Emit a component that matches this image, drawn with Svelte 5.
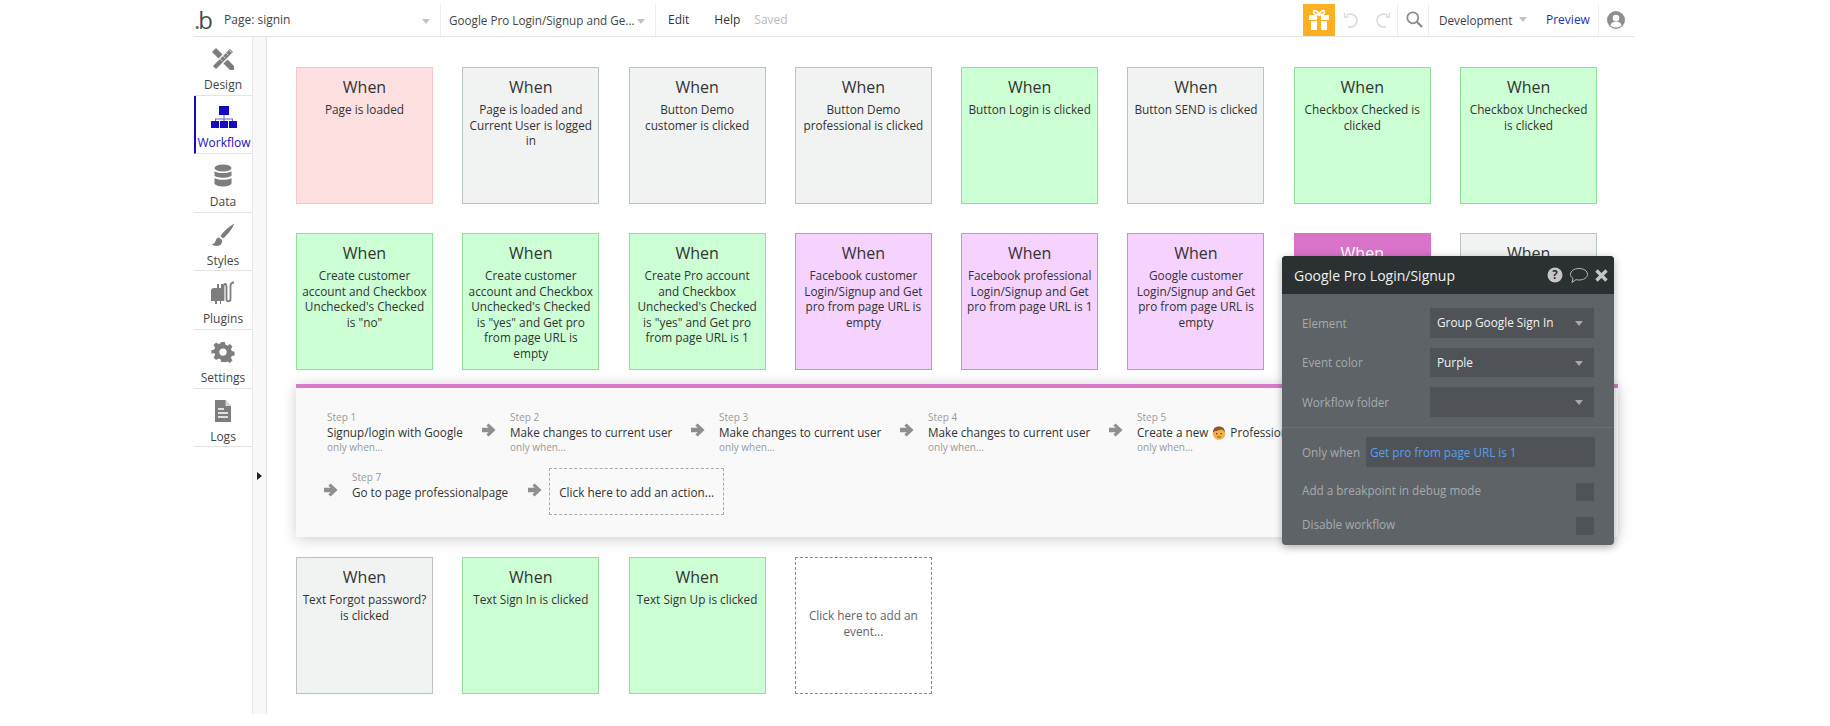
<script lang="ts">
	type Tone = 'red' | 'gray' | 'green' | 'purple' | 'picked';

	interface Evt {
		tone: Tone;
		text: string;
	}

	const upperEvents: Evt[] = [
		{ tone: 'red', text: 'Page is loaded' },
		{ tone: 'gray', text: 'Page is loaded and Current User is logged in' },
		{ tone: 'gray', text: 'Button Demo customer is clicked' },
		{ tone: 'gray', text: 'Button Demo professional is clicked' },
		{ tone: 'green', text: 'Button Login is clicked' },
		{ tone: 'gray', text: 'Button SEND is clicked' },
		{ tone: 'green', text: 'Checkbox Checked is clicked' },
		{ tone: 'green', text: 'Checkbox Unchecked is clicked' },
		{ tone: 'green', text: 'Create customer account and Checkbox Unchecked\'s Checked is "no"' },
		{ tone: 'green', text: 'Create customer account and Checkbox Unchecked\'s Checked is "yes" and Get pro from page URL is empty' },
		{ tone: 'green', text: 'Create Pro account and Checkbox Unchecked\'s Checked is "yes" and Get pro from page URL is 1' },
		{ tone: 'purple', text: 'Facebook customer Login/Signup and Get pro from page URL is empty' },
		{ tone: 'purple', text: 'Facebook professional Login/Signup and Get pro from page URL is 1' },
		{ tone: 'purple', text: 'Google customer Login/Signup and Get pro from page URL is empty' },
		{ tone: 'picked', text: '' },
		{ tone: 'gray', text: '' }
	];

	const lowerEvents: Evt[] = [
		{ tone: 'gray', text: 'Text Forgot password? is clicked' },
		{ tone: 'green', text: 'Text Sign In is clicked' },
		{ tone: 'green', text: 'Text Sign Up is clicked' }
	];

	const steps = [
		{ n: 1, name: 'Signup/login with Google', width: 155 },
		{ n: 2, name: 'Make changes to current user', width: 181 },
		{ n: 3, name: 'Make changes to current user', width: 181 },
		{ n: 4, name: 'Make changes to current user', width: 181 }
	];

	const tabs = ['Design', 'Workflow', 'Data', 'Styles', 'Plugins', 'Settings', 'Logs'];
</script>

{#snippet arrow()}
	<svg class="arrow" width="14" height="14" viewBox="0 0 14 14">
		<path d="M0 4.8h6.6L4.4 2.4 6.6.4 13.6 7l-7 6.600-2.200-2 2.200-2.400H0z" fill="#8f8f8f" />
	</svg>
{/snippet}

{#snippet tabIcon(name: string)}
	{#if name === 'Design'}
		<svg width="24" height="24" viewBox="0 0 24 24" fill="#7d7d7d">
			<path d="M1 5 5 1l18 18v4h-4z" />
			<path d="M23 5 19 1 1 19l4 4z" stroke="#fff" stroke-width="1.4" />
			<path d="M18.6 3.4 20.6 5.4M15.6 6.4 17 7.8M12.6 9.4 14 10.8M9.6 12.4 11 13.8" stroke="#fff" stroke-width="1" />
		</svg>
	{:else if name === 'Workflow'}
		<svg width="26" height="24" viewBox="0 0 26 24" fill="#1509c4">
			<rect x="8" y="1" width="10" height="9" />
			<path d="M12.5 10h1v3.5H22V17h-1v-2.5h-7.5V17h-1v-2.5H5V17H4v-3.5h8.5z" fill="#6d66d8" />
			<rect x="0" y="16" width="8" height="7" />
			<rect x="9" y="16" width="8" height="7" />
			<rect x="18" y="16" width="8" height="7" />
		</svg>
	{:else if name === 'Data'}
		<svg width="18" height="24" viewBox="0 0 18 24" fill="#7d7d7d">
			<ellipse cx="9" cy="4" rx="8.5" ry="3.6" />
			<path d="M.5 7.2c2 2.4 15 2.4 17 0v4.2c-1.5 3-15.5 3-17 0z" />
			<path d="M.5 14c2 2.4 15 2.4 17 0v5.6c-1.5 4-15.5 4-17 0z" />
		</svg>
	{:else if name === 'Styles'}
		<svg width="24" height="24" viewBox="0 0 24 24" fill="#7d7d7d">
			<path d="M23.5.5C19 3 13 7.5 9.5 13l2.5 2.5C17 11.5 21.5 5 23.5.5z" />
			<path d="M8 14.5c-3.5.5-3 4-4.5 5.500-.7.8-2 1-3 1 2.500 2.500 8 3 10-.5 1-1.800.5-3.500-.2-4z" />
		</svg>
	{:else if name === 'Plugins'}
		<svg width="24" height="24" viewBox="0 0 24 24" fill="#7d7d7d">
			<path d="M3 7h3V3h2v4h2V3h2v4h1v13h-3v3H9v-3H6v3H4v-3H0V10c0-2 1-3 3-3z" />
			<path d="M12.5 20V7.500c0-6 3-6 3-1V18c0 3 4 3 4 0V4.500c0-1.500 1-3 3.500-3" fill="none" stroke="#7d7d7d" stroke-width="1.8" />
		</svg>
	{:else if name === 'Settings'}
		<svg width="24" height="24" viewBox="0 0 24 24" fill="#7d7d7d">
			<path fill-rule="evenodd" d="M10 1h4l.7 3.100 2.200.9 2.700-1.700 2.800 2.800-1.700 2.700.9 2.200 3.100.7v4l-3.100.7-.9 2.200 1.700 2.700-2.800 2.800-2.700-1.700-2.200.9L14 23h-4l-.7-3.100-2.200-.9-2.700 1.700-2.800-2.800 1.700-2.700-.9-2.200L-.7 14v-4l3.100-.7.9-2.200L1.600 4.400l2.800-2.800 2.700 1.700 2.200-.9zM12 8a4 4 0 1 0 0 8 4 4 0 0 0 0-8z" transform="translate(1.1 1.1) scale(.91)" />
		</svg>
	{:else}
		<svg width="18" height="24" viewBox="0 0 18 24" fill="#7d7d7d">
			<path d="M1 1h10.500L17 7v16H1z" />
			<path d="M11.500 1v6H17" fill="#fff" opacity=".7" />
			<path d="M4 10h6M4 14h10M4 18h10" stroke="#fff" stroke-width="1.3" />
		</svg>
	{/if}
{/snippet}

{#snippet eventCard(evt: Evt)}
	<div class="card {evt.tone}">
		<div class="when">When</div>
		<div class="cond">{evt.text}</div>
	</div>
{/snippet}

<div class="page">
	<header class="topbar">
		<div class="logo"><span class="dot">.</span>b</div>
		<div class="picker page-picker">Page: signin<span class="caret"></span></div>
		<div class="picker flow-picker">Google Pro Login/Signup and Ge...<span class="caret"></span></div>
		<nav class="menu">
			<span>Edit</span>
			<span>Help</span>
			<span class="saved">Saved</span>
		</nav>
		<div class="gift">
			<svg width="22" height="22" viewBox="0 0 22 22" fill="#fff">
				<path d="M1 6h8v5H1zM13 6h8v5h-8zM3 12h6v9H3zM13 12h6v9h-6z" />
				<path d="M10.5 6C8 5.5 5 5 5.5 2.5 6.5.5 9.5 2 11 5.500 12.500 2 15.500.5 16.500 2.500 17 5 14 5.500 11.500 6z" fill="none" stroke="#fff" stroke-width="1.6" />
			</svg>
		</div>
		<div class="history">
			<svg width="16" height="16" viewBox="0 0 16 16" fill="none" stroke="#d9d9d9" stroke-width="1.5">
				<path d="M3.5 3.300A6.500 6.500 0 1 1 5 14.500" />
				<path d="M1.500 1v4h4" stroke-width="1.3" />
			</svg>
			<svg width="16" height="16" viewBox="0 0 16 16" fill="none" stroke="#d9d9d9" stroke-width="1.5">
				<path d="M12.5 3.300A6.500 6.500 0 1 0 11 14.500" />
				<path d="M14.500 1v4h-4" stroke-width="1.3" />
			</svg>
		</div>
		<div class="search">
			<svg width="17" height="17" viewBox="0 0 17 17" fill="none" stroke="#8c8c8c" stroke-width="1.8">
				<circle cx="6.8" cy="6.8" r="5.5" />
				<path d="M10.8 10.800 16 16" stroke-width="2.2" />
			</svg>
		</div>
		<div class="env">Development<span class="caret"></span></div>
		<div class="preview">Preview</div>
		<div class="account">
			<svg width="18" height="18" viewBox="0 0 18 18">
				<circle cx="9" cy="9" r="9" fill="#8f8f8f" />
				<circle cx="9" cy="7" r="3.3" fill="#fff" />
				<path d="M3.5 14.500c.5-3 3-4 5.500-4s5 1 5.500 4C13 16 11 16.500 9 16.500S5 16 3.500 14.500z" fill="#fff" />
			</svg>
		</div>
	</header>

	<div class="body">
		<aside class="sidebar">
			{#each tabs as tab}
				<div class="tab" class:active={tab === 'Workflow'}>
					<span class="tab-icon">{@render tabIcon(tab)}</span>
					<span>{tab}</span>
				</div>
			{/each}
		</aside>
		<div class="strip"><span class="strip-arrow"></span></div>

		<main class="canvas">
			<section class="grid">
				{#each upperEvents as evt}
					{@render eventCard(evt)}
				{/each}
			</section>

			<section class="actions">
				<div class="action-row">
					{#each steps as step}
						<div class="step" style="width: {step.width}px">
							<div class="step-no">Step {step.n}</div>
							<div class="step-name">{step.name}</div>
							<div class="only">only when...</div>
						</div>
						{@render arrow()}
					{/each}
					<div class="step">
						<div class="step-no">Step 5</div>
						<div class="step-name">
							Create a new
							<svg class="emoji" width="14" height="14" viewBox="0 0 14 14">
								<circle cx="7" cy="7.5" r="6.3" fill="#f5b04a" />
								<path d="M1 6.500C1 2 4 .5 7 .5s6 1.500 6 6c-1-2-2-2.500-3.500-3C7.500 4.500 3 4.500 1 6.500z" fill="#8a5a2b" />
								<circle cx="4.8" cy="7.8" r=".8" fill="#5a3a1a" />
								<circle cx="9.2" cy="7.8" r=".8" fill="#5a3a1a" />
								<path d="M5 10.500c1 .8 3 .8 4 0" fill="none" stroke="#5a3a1a" stroke-width=".7" />
							</svg>
							Professional
						</div>
						<div class="only">only when...</div>
					</div>
				</div>
				<div class="action-row second">
					{@render arrow()}
					<div class="step last">
						<div class="step-no">Step 7</div>
						<div class="step-name">Go to page professionalpage</div>
					</div>
					{@render arrow()}
					<div class="add-action">Click here to add an action...</div>
				</div>
			</section>

			<section class="grid">
				{#each lowerEvents as evt}
					{@render eventCard(evt)}
				{/each}
				<div class="card add-event">Click here to add an event...</div>
			</section>

			<div class="palette">
				<div class="palette-head">
					<span class="palette-title">Google Pro Login/Signup</span>
					<svg width="16" height="16" viewBox="0 0 16 16">
						<circle cx="8" cy="8" r="7.5" fill="#c4c6c7" />
						<text x="8" y="12" text-anchor="middle" font-size="11.5" font-weight="700" font-family="Open Sans" fill="#2b3032">?</text>
					</svg>
					<svg width="20" height="17" viewBox="0 0 20 17" fill="none" stroke="#b5b8b9" stroke-width="1">
						<path d="M10 1.500c5 0 8.500 2.500 8.500 5.800S15 13 10 13c-1 0-2-.1-3-.4L3 15.500l1-4C2.500 10.500 1.500 9 1.500 7.300 1.500 4 5 1.500 10 1.500z" />
					</svg>
					<svg width="13" height="13" viewBox="0 0 13 13" stroke="#c4c6c7" stroke-width="3.4">
						<path d="M1.500 1.500 11.500 11.500M11.500 1.500 1.500 11.500" />
					</svg>
				</div>
				<div class="palette-fields">
					<div class="field">
						<span class="label">Element</span>
						<div class="select">Group Google Sign In<span class="caret dark"></span></div>
					</div>
					<div class="field">
						<span class="label">Event color</span>
						<div class="select">Purple<span class="caret dark"></span></div>
					</div>
					<div class="field">
						<span class="label">Workflow folder</span>
						<div class="select"><span class="caret dark"></span></div>
					</div>
				</div>
				<div class="palette-lower">
					<div class="only-when">
						<span class="label">Only when</span>
						<div class="expr">Get pro from page URL is 1</div>
					</div>
					<div class="toggle">
						<span class="label">Add a breakpoint in debug mode</span>
						<span class="box"></span>
					</div>
					<div class="toggle">
						<span class="label">Disable workflow</span>
						<span class="box"></span>
					</div>
				</div>
			</div>
		</main>
	</div>
</div>

<style>
	:global(body) {
		margin: 0;
		background: #fff;
	}

	.page {
		width: 1440px;
		height: 726px;
		margin-left: 194px;
		font-family: 'Open Sans', sans-serif;
		color: #2b2b2b;
		overflow: hidden;
	}

	.topbar {
		display: flex;
		align-items: center;
		height: 37px;
		border-bottom: 1px solid #e4e4e4;
		box-sizing: border-box;
		font-size: 12px;
		padding-top: 3px;
	}

	.logo {
		width: 29px;
		flex: none;
		font-size: 24px;
		line-height: 30px;
		color: #4a4a4a;
		letter-spacing: -2px;
	}

	.dot {
		color: #666;
	}

	.picker {
		display: flex;
		align-items: center;
		height: 32px;
		flex: none;
		box-sizing: border-box;
		border-right: 1px solid #eee;
		color: #444;
		position: relative;
	}

	.page-picker {
		width: 218px;
		padding-left: 1px;
	}

	.flow-picker {
		width: 215px;
		padding-left: 8px;
		font-size: 11.7px;
	}

	.caret {
		display: inline-block;
		width: 0;
		height: 0;
		border: 4px solid transparent;
		border-top: 5px solid #c2c2c2;
		border-bottom: 0;
	}

	.page-picker .caret {
		position: absolute;
		right: 10px;
		top: 15px;
	}

	.flow-picker .caret {
		position: absolute;
		right: 10px;
		top: 15px;
	}

	.menu {
		display: flex;
		gap: 25px;
		margin-left: 12px;
		width: 635px;
		flex: none;
		color: #333;
	}

	.saved {
		color: #bbb;
		margin-left: -11px;
	}

	.gift {
		width: 32px;
		height: 32px;
		flex: none;
		background: #fdb022;
		display: flex;
		align-items: center;
		justify-content: center;
	}

	.history {
		display: flex;
		gap: 16px;
		height: 32px;
		width: 63px;
		flex: none;
		box-sizing: border-box;
		align-items: center;
		padding-left: 8px;
		border-right: 1px solid #eee;
	}

	.search {
		display: flex;
		align-items: center;
		height: 32px;
		width: 31px;
		flex: none;
		padding-left: 8px;
		box-sizing: border-box;
		border-right: 1px solid #eee;
	}

	.env {
		display: flex;
		align-items: center;
		gap: 7px;
		margin-left: 10px;
		width: 107px;
		flex: none;
		color: #3c3c46;
		font-size: 11.7px;
	}

	.preview {
		color: #2d2db8;
		width: 53px;
		flex: none;
		height: 32px;
		line-height: 32px;
		border-right: 1px solid #eee;
		box-sizing: border-box;
	}

	.account {
		display: flex;
		padding-left: 8px;
	}

	.body {
		display: flex;
		height: 689px;
	}

	.sidebar {
		width: 58px;
		flex: none;
		box-sizing: border-box;
	}

	.tab {
		display: flex;
		flex-direction: column;
		align-items: center;
		height: 58.6px;
		box-sizing: border-box;
		border-bottom: 1px solid #e4e4e4;
		font-size: 12px;
		line-height: 16px;
		color: #444;
		padding-top: 10px;
	}

	.tab-icon {
		display: flex;
		height: 24px;
		margin-bottom: 6px;
	}

	.tab.active {
		color: #1b10c4;
		border-left: 2px solid #1509c4;
		padding-top: 9px;
	}

	.strip {
		width: 15px;
		flex: none;
		height: 677px;
		background: #f8f8f8;
		border-left: 1px solid #e9e9e9;
		border-right: 1px solid #e4e4e4;
		box-sizing: border-box;
		position: relative;
	}

	.strip-arrow {
		position: absolute;
		left: 4px;
		top: 435px;
		border: 4px solid transparent;
		border-left: 5px solid #222;
		border-right: 0;
	}

	.canvas {
		position: relative;
		flex: 1;
		padding: 30px 18px 0 29px;
	}

	.grid {
		display: grid;
		grid-template-columns: repeat(8, 137px);
		column-gap: 29.3px;
		row-gap: 29px;
	}

	.card {
		height: 137px;
		box-sizing: border-box;
		border: 1px solid;
		padding: 9px 4px 0;
		text-align: center;
		color: #333;
	}

	.when {
		font-size: 16px;
		line-height: 21px;
	}

	.cond {
		font-size: 11.8px;
		line-height: 15.6px;
		margin-top: 4px;
	}

	.red {
		background: #ffe0e0;
		border-color: #f6c6c6;
	}

	.gray {
		background: #f1f3f2;
		border-color: #b9c3c6;
	}

	.green {
		background: #ccffd3;
		border-color: #8fe09c;
	}

	.purple {
		background: #f5d2ff;
		border-color: #d687d8;
	}

	.picked {
		background: #d973c9;
		border-color: #d973c9;
	}

	.picked .when {
		color: #fff;
	}

	.add-event {
		border: 1px dashed #888;
		background: #fff;
		color: #666;
		font-size: 11.8px;
		line-height: 15.6px;
		padding: 50px 10px 0;
	}

	.actions {
		margin: 14px -2px 20px 0;
		height: 153px;
		box-sizing: border-box;
		border-top: 4px solid #d87ac8;
		background: #f9f9f9;
		box-shadow: 0 2px 14px rgba(0, 0, 0, 0.2);
		padding: 22px 0 0 31px;
		overflow: hidden;
	}

	.action-row {
		display: flex;
		align-items: center;
		white-space: nowrap;
		height: 45px;
	}

	.action-row .arrow {
		flex: none;
		margin-right: 14px;
		margin-top: -6px;
	}

	.step {
		flex: none;
	}

	.step-no {
		font-size: 10px;
		line-height: 13px;
		color: #999;
	}

	.step-name {
		font-size: 11.7px;
		line-height: 16px;
		color: #333;
	}

	.emoji {
		vertical-align: -3px;
		margin: 0 1px;
	}

	.only {
		font-size: 10px;
		line-height: 13px;
		margin-top: 1px;
		color: #999;
	}

	.second {
		margin: 13px 0 0 -3px;
		height: 47px;
	}

	.second .arrow {
		margin-top: -3px;
	}

	.last {
		margin-right: 20px;
		margin-top: -13px;
	}

	.add-action {
		width: 175px;
		height: 47px;
		box-sizing: border-box;
		border: 1px dashed #aaa;
		display: flex;
		align-items: center;
		justify-content: center;
		font-size: 11.8px;
		color: #333;
		margin-left: -7px;
	}

	.palette {
		position: absolute;
		left: 1015px;
		top: 219px;
		width: 332px;
		height: 289px;
		border-radius: 4px;
		background: #5e6367;
		box-shadow: 0 2px 8px rgba(0, 0, 0, 0.3);
		color: #fff;
		overflow: hidden;
		font-size: 12px;
	}

	.palette-head {
		display: flex;
		align-items: center;
		height: 38px;
		padding: 0 6px 0 12px;
		background: #2b3032;
		gap: 6px;
	}

	.palette-title {
		flex: 1;
		font-size: 14px;
		color: #f0f0f0;
	}

	.palette-fields {
		display: flex;
		flex-direction: column;
		gap: 10px;
		padding: 14px 20px 10px 20px;
		border-bottom: 1px solid #6a6f73;
	}

	.field {
		display: flex;
		align-items: center;
		justify-content: space-between;
	}

	.label {
		color: #a6aaad;
		font-size: 11.7px;
	}

	.select {
		position: relative;
		width: 164px;
		height: 29.5px;
		line-height: 29px;
		padding-left: 7px;
		box-sizing: border-box;
		background: #4f5357;
		color: #f2f2f2;
		font-size: 11.8px;
	}

	.caret.dark {
		position: absolute;
		right: 11px;
		top: 13px;
		border-top-color: #a6aaad;
	}

	.palette-lower {
		padding: 9px 20px 0 20px;
	}

	.only-when {
		display: flex;
		align-items: center;
		justify-content: space-between;
		margin-bottom: 16px;
	}

	.expr {
		width: 229px;
		height: 30px;
		line-height: 30px;
		box-sizing: border-box;
		padding-left: 4px;
		background: #4f5357;
		color: #5a9eec;
		margin-right: -1px;
		font-size: 11.7px;
	}

	.toggle {
		display: flex;
		align-items: center;
		justify-content: space-between;
		height: 18px;
		margin-bottom: 16px;
	}

	.toggle .label {
		margin-top: -3px;
	}

	.box {
		width: 18px;
		height: 18px;
		background: #4f5357;
	}
</style>
